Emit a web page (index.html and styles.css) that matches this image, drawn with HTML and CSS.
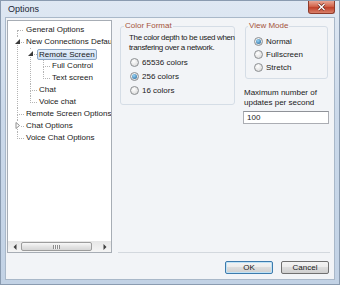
FILE: index.html
```html
<!DOCTYPE html>
<html lang="en">
<head>
    <meta charset="UTF-8">
    <title>Options</title>
    <link rel="stylesheet" href="styles.css">
</head>
<body>

    <div class="window">

        <!-- Title bar -->
        <div class="titlebar">
            <span class="title">Options</span>
            <span class="close">
                <svg width="11" height="8" viewBox="0 0 11 8">
                    <path d="M2.5 1 L8.5 7 M8.5 1 L2.5 7" stroke="#6b2a20" stroke-width="2.8"/>
                    <path d="M2.5 1 L8.5 7 M8.5 1 L2.5 7" stroke="#fff" stroke-width="1.4"/>
                </svg>
            </span>
        </div>

        <div class="client">
            <div class="content">

                <!-- Settings tree -->
                <div class="tree">
                    <div class="tree-items">
                        <ul class="tree-root">
                            <li><span class="node">General Options</span></li>
                            <li>
                                <span class="expander"><svg width="7" height="7" viewBox="0 0 7 7"><polygon points="6,1 6,6 1,6" fill="#3a3a3a"/></svg></span>
                                <span class="node">New Connections Defaults</span>
                                <ul>
                                    <li>
                                        <span class="expander"><svg width="7" height="7" viewBox="0 0 7 7"><polygon points="6,1 6,6 1,6" fill="#3a3a3a"/></svg></span>
                                        <span class="node selected">Remote Screen</span>
                                        <ul>
                                            <li><span class="node">Full Control</span></li>
                                            <li><span class="node">Text screen</span></li>
                                        </ul>
                                    </li>
                                    <li><span class="node">Chat</span></li>
                                    <li><span class="node">Voice chat</span></li>
                                </ul>
                            </li>
                            <li><span class="node">Remote Screen Options</span></li>
                            <li>
                                <span class="expander"><svg width="7" height="7" viewBox="0 0 7 7"><polygon points="2,0.5 5.5,3.5 2,6.5" fill="#fff" stroke="#8f8f8f"/></svg></span>
                                <span class="node">Chat Options</span>
                            </li>
                            <li><span class="node">Voice Chat Options</span></li>
                        </ul>
                    </div>
                    <div class="hscroll">
                        <span class="scroll-arrow"><svg width="4" height="6" viewBox="0 0 4 6"><polygon points="3.5,0 0.5,3 3.5,6" fill="#404040"/></svg></span>
                        <span class="scroll-track">
                            <span class="scroll-thumb"><span class="grip"></span></span>
                        </span>
                        <span class="scroll-arrow"><svg width="4" height="6" viewBox="0 0 4 6"><polygon points="0.5,0 3.5,3 0.5,6" fill="#404040"/></svg></span>
                    </div>
                </div>

                <!-- Page for the selected node -->
                <div class="panel">
                    <div class="panel-left">
                        <fieldset class="group">
                            <legend>Color Format</legend>
                            <p class="group-note">The color depth to be used when<br>transfering over a network.</p>
                            <div class="options color-options">
                                <label class="option"><span class="radio"></span>65536 colors</label>
                                <label class="option"><span class="radio checked"></span>256 colors</label>
                                <label class="option"><span class="radio"></span>16 colors</label>
                            </div>
                        </fieldset>
                    </div>
                    <div class="panel-right">
                        <fieldset class="group view-group">
                            <legend>View Mode</legend>
                            <div class="options view-options">
                                <label class="option"><span class="radio checked"></span>Normal</label>
                                <label class="option"><span class="radio"></span>Fullscreen</label>
                                <label class="option"><span class="radio"></span>Stretch</label>
                            </div>
                        </fieldset>
                        <div class="updates-label">Maximum number of<br>updates per second</div>
                        <input class="textbox" type="text" value="100">
                    </div>
                </div>
            </div>

            <div class="buttons">
                <button class="btn default">OK</button>
                <button class="btn">Cancel</button>
            </div>
        </div>
    </div>

</body>
</html>
```

FILE: styles.css
```css
body {
    margin: 0;
    font-family: "Liberation Sans", Arial, sans-serif;
    font-size: 8px;
    color: #1a1a1a;
}

.window {
    width: 340px;
    height: 285px;
    box-sizing: border-box;
    border: 1px solid #8a9bb0;
    background: linear-gradient(#dfe8f3, #cbd9ea 40%, #c2d2e5);
    padding: 0 4px 4px 4px;
    display: flex;
    flex-direction: column;
}

/* Title bar */
.titlebar {
    height: 16px;
    display: flex;
    align-items: flex-start;
}

.title {
    font-size: 9px;
    line-height: 17px;
    padding-left: 3px;
    color: #1b2636;
}

.close {
    margin-left: auto;
    width: 27px;
    height: 13px;
    box-sizing: border-box;
    border: 1px solid #8e3b2b;
    border-top: none;
    border-radius: 0 0 3px 3px;
    background: linear-gradient(#e9a796, #d2654c 45%, #c0412a 55%, #d9806a);
    display: flex;
    align-items: center;
    justify-content: center;
}

.client {
    flex: 1;
    background-color: #f2f4f7;
    border: 1px solid #a9b8c9;
    padding: 2px 4px 0 1px;
    display: flex;
    flex-direction: column;
}

.content {
    display: flex;
}

/* Tree */
.tree {
    width: 105px;
    height: 233px;
    box-sizing: border-box;
    border: 1px solid #a7adb5;
    background-color: #fff;
    display: flex;
    flex-direction: column;
}

.tree-items {
    flex: 1;
    overflow: hidden;
    padding-top: 3px;
}

.tree-root,
.tree-root ul {
    list-style: none;
    margin: 0;
    padding: 0;
}

.tree-root {
    margin-left: 9px;
}

.tree-root ul {
    margin-left: 6px;
}

.tree-root li {
    position: relative;
    padding-left: 7px;
    line-height: 12px;
    white-space: nowrap;
}

.tree-root li::before {
    content: '';
    position: absolute;
    left: 0;
    top: 0;
    width: 6px;
    height: 6px;
    border-left: 1px dotted #b4b4b4;
    border-bottom: 1px dotted #b4b4b4;
}

.tree-root li::after {
    content: '';
    position: absolute;
    left: 0;
    top: 6px;
    bottom: 0;
    border-left: 1px dotted #b4b4b4;
}

.tree-root > li:first-child::before {
    border-left: none;
}

.tree-root li:last-child::after {
    display: none;
}

.node {
    display: inline-block;
    height: 12px;
    line-height: 12px;
    padding: 0 2px;
    vertical-align: top;
    box-sizing: border-box;
}

.node.selected {
    height: 11px;
    margin-top: 1px;
    line-height: 9px;
    padding: 0 1px;
    border: 1px solid #8ba6c4;
    border-radius: 2px;
    background: linear-gradient(#e4eefa, #cddff4);
}

.expander {
    position: absolute;
    left: -3px;
    top: 2px;
    width: 7px;
    height: 7px;
    background-color: #fff;
    z-index: 1;
    display: flex;
}

/* Horizontal scrollbar */
.hscroll {
    height: 11px;
    display: flex;
    background: linear-gradient(#e6e6e6, #f5f5f5);
}

.scroll-arrow {
    width: 13px;
    display: flex;
    align-items: center;
    justify-content: center;
}

.scroll-track {
    flex: 1;
    display: flex;
    padding: 1px 0;
}

.scroll-thumb {
    width: 71px;
    box-sizing: border-box;
    border: 1px solid #9c9c9c;
    border-radius: 2px;
    background: linear-gradient(#f8f8f8, #e4e4e4 50%, #d6d6d6);
    display: flex;
    align-items: center;
    justify-content: center;
}

.grip {
    width: 7px;
    height: 4px;
    background: repeating-linear-gradient(90deg, #8d8d8d 0 1px, #f4f4f4 1px 2px);
}

/* Right page */
.panel {
    flex: 1;
    margin-left: 6px;
    padding: 1px 0 0 2px;
    border-bottom: 1px solid #d3d8de;
    display: flex;
    gap: 8px;
    align-items: flex-start;
}

.panel-left {
    width: 115px;
}

.panel-right {
    width: 86px;
    display: flex;
    flex-direction: column;
}

.group {
    margin: 0;
    min-width: 0;
    padding: 2px 2px 7px 9px;
    border: 1px solid #d5dde6;
    border-radius: 3px;
}

.group legend {
    padding: 0 1px;
    margin-left: -6px;
    line-height: 10px;
    color: #a4533a;
}

.group-note {
    margin: 0 0 2px -1px;
    line-height: 10px;
    letter-spacing: -0.35px;
    white-space: nowrap;
}

.option {
    display: flex;
    align-items: center;
    height: 14px;
}

.view-group {
    margin: 0 1px 0 2px;
    padding: 4px 4px 4px 8px;
}

.view-options .option {
    height: 13px;
}

.radio {
    flex: none;
    width: 9px;
    height: 9px;
    box-sizing: border-box;
    border-radius: 50%;
    border: 1px solid #8c8f92;
    background: radial-gradient(circle at 40% 35%, #fff, #d2d2d2);
    margin-right: 3px;
    display: flex;
    align-items: center;
    justify-content: center;
}

.radio.checked::after {
    content: '';
    width: 5px;
    height: 5px;
    border-radius: 50%;
    background: radial-gradient(circle at 40% 35%, #9ad6f7, #1d5d93);
}

.updates-label {
    margin-top: 9px;
    padding-left: 1px;
    line-height: 10px;
}

.textbox {
    margin-top: 3px;
    width: 86px;
    height: 13px;
    box-sizing: border-box;
    border: 1px solid #abadb3;
    border-top-color: #8f9298;
    padding: 0 3px;
    font: inherit;
    color: #1a1a1a;
    background-color: #fff;
}

/* Dialog buttons */
.buttons {
    display: flex;
    justify-content: flex-end;
    gap: 8px;
    margin-top: 8px;
    padding-right: 1px;
}

.btn {
    width: 48px;
    height: 13px;
    padding: 0;
    font: inherit;
    color: #1a1a1a;
    border: 1px solid #707070;
    border-radius: 2px;
    background: linear-gradient(#f3f3f3, #ebebeb 50%, #dddddd 50%, #cfcfcf);
}

.btn.default {
    border-color: #3d7bad;
    box-shadow: inset 0 0 0 1px #bfe2f6;
}
```
